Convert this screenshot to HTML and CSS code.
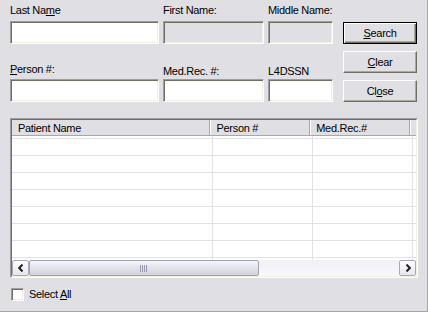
FILE: index.html
```html
<!DOCTYPE html>
<html lang="en">
<head>
  <meta charset="UTF-8" />
  <title>Patient Search</title>
  <link rel="stylesheet" href="styles.css">
</head>
<body>
  <div class="dialog">
    <div class="top">
      <div class="fields">
        <label class="lbl">Last Na<u>m</u>e</label>
        <label class="lbl">First Name:</label>
        <label class="lbl">Middle Name:</label>
        <input class="edit" type="text">
        <input class="edit" type="text" disabled>
        <input class="edit" type="text" disabled>
        <label class="lbl lbl-low lbl-up"><u>P</u>erson #:</label>
        <label class="lbl lbl-low">Med.Rec. #:</label>
        <label class="lbl lbl-low">L4DSSN</label>
        <input class="edit" type="text">
        <input class="edit" type="text">
        <input class="edit" type="text">
      </div>
      <div class="buttons">
        <button class="btn btn-default"><u>S</u>earch</button>
        <button class="btn"><u>C</u>lear</button>
        <button class="btn">Cl<u>o</u>se</button>
      </div>
    </div>

    <div class="list">
      <div class="list-inner">
        <div class="list-head">
          <div class="hcol hcol-name">Patient Name</div>
          <div class="hcol hcol-num">Person #</div>
          <div class="hcol hcol-num">Med.Rec.#</div>
          <div class="hcol hcol-fill"></div>
        </div>
        <div class="list-body" id="list-body"></div>
        <div class="hscroll">
          <div class="sbtn">
            <svg width="6" height="8" viewBox="0 0 6 8"><path d="M4.5 0.5 L1.2 4 L4.5 7.5" fill="none" stroke="#222" stroke-width="2"/></svg>
          </div>
          <div class="thumb">
            <svg width="8" height="7" viewBox="0 0 8 7"><path d="M0.5 0v7M2.5 0v7M4.5 0v7M6.5 0v7" stroke="#9a9aae" stroke-width="1"/></svg>
          </div>
          <div class="track"></div>
          <div class="sbtn">
            <svg width="6" height="8" viewBox="0 0 6 8"><path d="M1.5 0.5 L4.8 4 L1.5 7.5" fill="none" stroke="#222" stroke-width="2"/></svg>
          </div>
        </div>
      </div>
    </div>

    <label class="check"><span class="box"></span><span>Select <u>A</u>ll</span></label>
  </div>

  <script>
    const body = document.getElementById('list-body');
    let html = '<div class="row row-first"><div class="cell cell-name"></div><div class="cell"></div><div class="cell"></div></div>';
    for (let i = 0; i < 8; i++) {
      html += '<div class="row"><div class="cell cell-name"></div><div class="cell"></div><div class="cell"></div></div>';
    }
    body.innerHTML = html;
  </script>
</body>
</html>
```

FILE: styles.css
```css
* { margin:0; padding:0; box-sizing:border-box; }
body { font-family:'Liberation Sans',Arial,sans-serif; font-size:11px; color:#000; background:#e0dfe3; }
.dialog { width:428px; height:312px; background:#e0dfe3; border-right:1px solid #a5a4a8; border-bottom:1px solid #a5a4a8; padding:4px 9px 0 10px; }
.top { display:flex; }
.fields { display:grid; grid-template-columns:149px 101px 65px; column-gap:4px; }
.lbl { display:block; line-height:13px; height:13px; margin-bottom:4px; letter-spacing:-0.3px; white-space:nowrap; }
.lbl-low { margin-top:21px; margin-bottom:1px; }
.lbl-low.lbl-up { margin-top:19px; margin-bottom:3px; }
.edit { display:block; width:100%; height:23px; background:#fff; border:1px solid; border-color:#9d9da1 #fff #fff #9d9da1; box-shadow:inset 1px 1px 0 #716f64, inset -1px -1px 0 #f1efe2; outline:none; font:inherit; }
.edit:disabled { background:#e0dfe3; }
.buttons { display:flex; flex-direction:column; gap:7px; margin-left:10px; padding-top:18px; }
.btn { width:74px; height:22px; background:#e0dfe3; border:1px solid; border-color:#fff #716f64 #716f64 #fff; box-shadow:inset -1px -1px 0 #aca899; font:inherit; letter-spacing:-0.3px; color:#000; cursor:pointer; }
.btn-default { border-color:#000; box-shadow:inset 1px 1px 0 #fff, inset -1px -1px 0 #716f64, inset -2px -2px 0 #aca899; }
.list { width:408px; height:160px; margin-top:16px; border:1px solid; border-color:#9d9da1 #fff #fff #9d9da1; }
.list-inner { height:100%; border:1px solid; border-color:#716f64 #f1efe2 #f1efe2 #716f64; background:#fff; display:flex; flex-direction:column; overflow:hidden; }
.list-head { display:flex; height:16px; background:#e0dfe3; border-bottom:1px solid #aca899; }
.hcol { height:15px; line-height:16px; padding-left:6px; border-right:1px solid #aca899; box-shadow:inset 1px 0 0 #fff; letter-spacing:-0.3px; white-space:nowrap; }
.hcol-name { width:199px; box-shadow:none; }
.hcol-num { width:100px; }
.hcol-fill { flex:1; border-right:none; }
.list-body { flex:1; overflow:hidden; }
.row { display:flex; height:17px; border-bottom:1px solid #e2e2e6; }
.row-first { height:3px; }
.cell { width:100px; border-right:1px solid #e2e2e6; }
.cell-name { width:201px; }
.hscroll { display:flex; height:16px; flex-shrink:0; }
.sbtn { width:17px; height:16px; display:flex; align-items:center; justify-content:center; border:1px solid #a8a8b6; border-radius:2px; background:linear-gradient(#fdfdff,#e6e6ee); }
.thumb { width:230px; display:flex; align-items:center; justify-content:center; border:1px solid #a0a0b2; border-radius:2px; background:linear-gradient(#f4f4f9,#d2d2de); }
.track { flex:1; background:linear-gradient(#f0f0f5,#f8f8fb); }
.check { display:flex; align-items:flex-start; gap:5px; margin-top:10px; margin-left:1px; line-height:13px; letter-spacing:-0.3px; }
.box { width:13px; height:13px; background:#fff; border:1px solid; border-color:#9d9da1 #fff #fff #9d9da1; box-shadow:inset 1px 1px 0 #716f64, inset -1px -1px 0 #f1efe2; }
```
